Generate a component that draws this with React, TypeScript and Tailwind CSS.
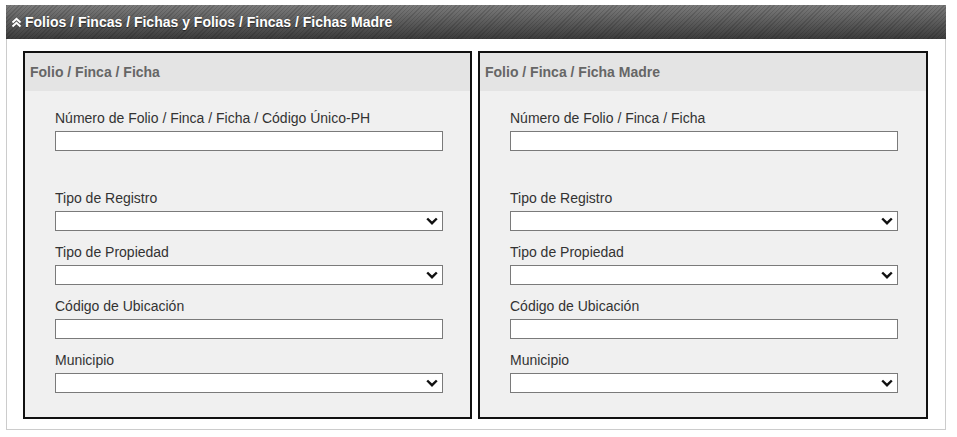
import React from "react";

const font = { fontFamily: '"Liberation Sans", Arial, sans-serif' };

function Chevron() {
  return (
    <svg width="12" height="8" viewBox="0 0 12 8" className="absolute right-[4px] top-1/2 -translate-y-1/2">
      <path d="M1.2 1.5 L6 6.2 L10.8 1.5" fill="none" stroke="#111" strokeWidth="2.4" />
    </svg>
  );
}

function Field({ label, select, className }: { label: string; select?: boolean; className?: string }) {
  return (
    <div className={className}>
      <div className="text-[14px] leading-[16px] text-[#333] h-[16px] whitespace-nowrap">{label}</div>
      <div className="relative mt-[5px] w-[388px] h-[20px] bg-white border border-[#7a7a7a]">
        {select && <Chevron />}
      </div>
    </div>
  );
}

function Panel({ title, first, wide }: { title: string; first: string; wide?: boolean }) {
  return (
    <div className={`${wide ? "w-[450px]" : "w-[449px]"} h-[368px] border-2 border-[#111] flex flex-col bg-[#f0f0f0]`}>
      <div className="h-[38px] bg-[#e4e4e4] flex items-center pl-[5px] text-[14px] font-bold text-[#666]">
        {title}
      </div>
      <div className="flex-1 pl-[30px] pt-[19px]">
        <Field label={first} />
        <Field label="Tipo de Registro" select className="mt-[39px]" />
        <Field label="Tipo de Propiedad" select className="mt-[13px]" />
        <Field label="Código de Ubicación" className="mt-[13px]" />
        <Field label="Municipio" select className="mt-[13px]" />
      </div>
    </div>
  );
}

export default function App() {
  return (
    <div className="w-[957px] h-[437px] bg-white pt-[5px] pl-[6px]" style={font}>
      <div className="w-[940px]">
        <div className="h-[34px] flex items-center pl-[5px] bg-[image:repeating-linear-gradient(135deg,rgba(0,0,0,0.14)_0px,rgba(0,0,0,0.14)_1px,transparent_1px,transparent_3px),linear-gradient(to_bottom,#7b7b7b,#3c3c3c)]">
          <svg width="11" height="11" viewBox="0 0 11 11" className="mr-[3px]">
            <path d="M1.5 5.5 L5.5 1.8 L9.5 5.5" fill="none" stroke="#fff" strokeWidth="2" />
            <path d="M1.5 9.5 L5.5 5.8 L9.5 9.5" fill="none" stroke="#fff" strokeWidth="2" />
          </svg>
          <span className="text-white font-bold text-[14px] [text-shadow:0_1px_1px_rgba(0,0,0,0.5)]">
            Folios / Fincas / Fichas y Folios / Fincas / Fichas Madre
          </span>
        </div>
        <div className="border-x border-b border-[#cccccc] pt-[12px] pl-[16px] pb-[10px] flex gap-[6px]">
          <Panel title="Folio / Finca / Ficha" first="Número de Folio / Finca / Ficha / Código Único-PH" />
          <Panel title="Folio / Finca / Ficha Madre" first="Número de Folio / Finca / Ficha" wide />
        </div>
      </div>
    </div>
  );
}
